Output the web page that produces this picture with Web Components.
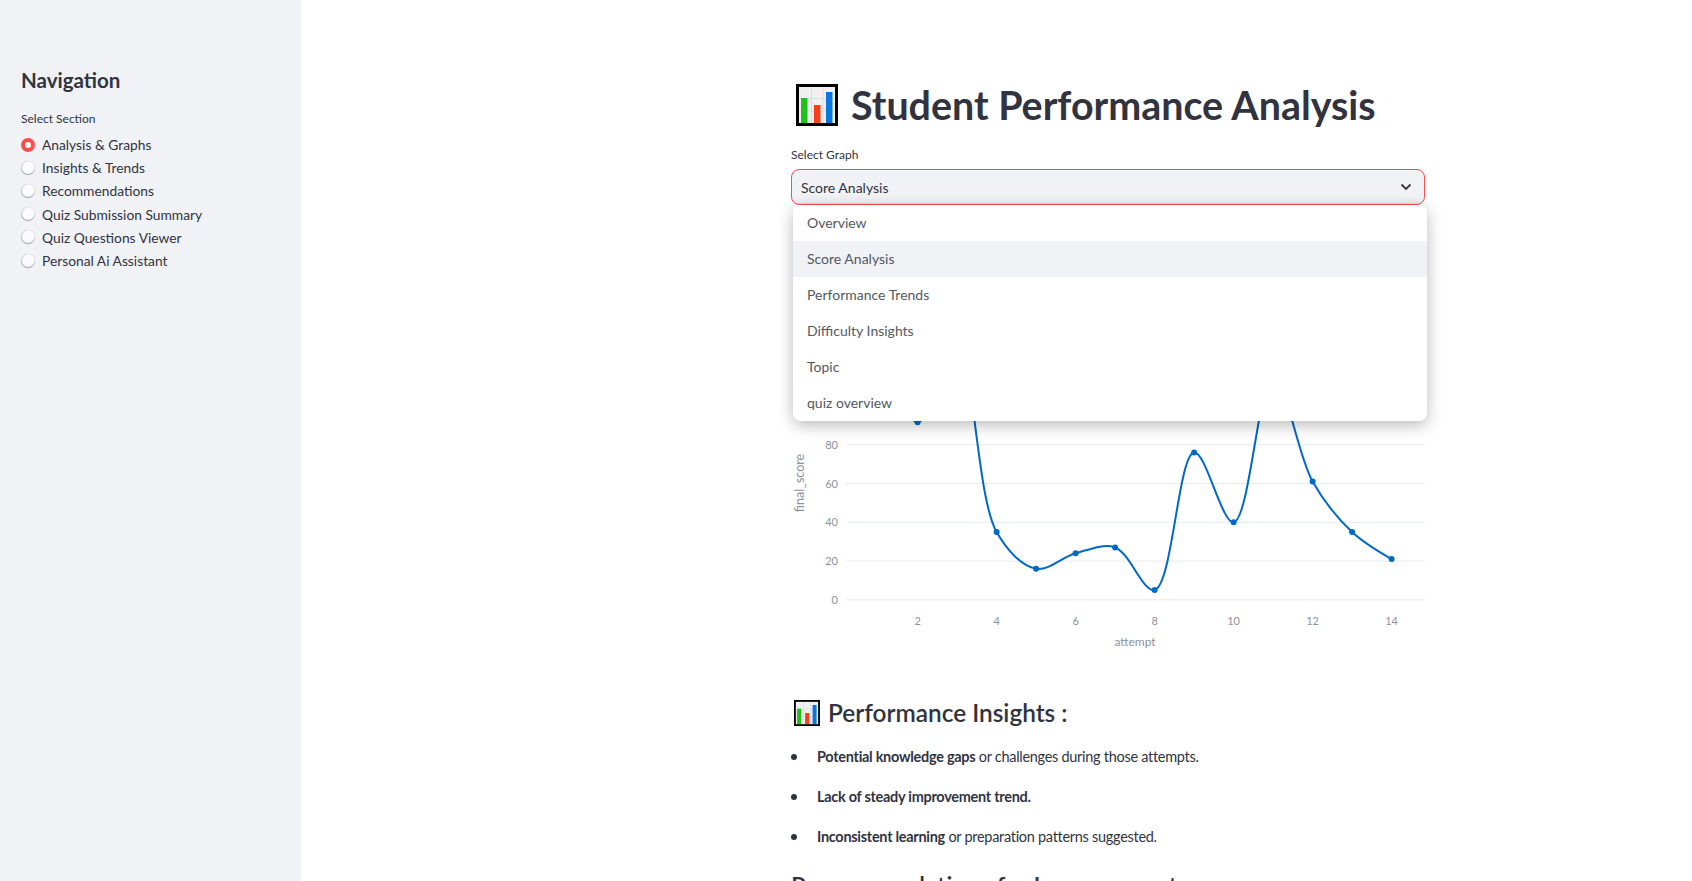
<!DOCTYPE html>
<html><head><meta charset="utf-8"><style>
html,body{margin:0;height:881px;overflow:hidden;background:#fff}
body{font-family:Lato,"Noto Sans",sans-serif;color:#31333f}
</style></head><body>
<app-shell>
  <side-nav slot="side" heading="Navigation" label="Select Section">
    <nav-radio checked>Analysis &amp; Graphs</nav-radio>
    <nav-radio>Insights &amp; Trends</nav-radio>
    <nav-radio>Recommendations</nav-radio>
    <nav-radio>Quiz Submission Summary</nav-radio>
    <nav-radio>Quiz Questions Viewer</nav-radio>
    <nav-radio>Personal Ai Assistant</nav-radio>
  </side-nav>
  <page-title>Student Performance Analysis</page-title>
  <select-box label="Select Graph" value="Score Analysis">
    <select-option>Overview</select-option>
    <select-option selected>Score Analysis</select-option>
    <select-option>Performance Trends</select-option>
    <select-option>Difficulty Insights</select-option>
    <select-option>Topic</select-option>
    <select-option>quiz overview</select-option>
  </select-box>
  <score-chart></score-chart>
  <section-heading>Performance Insights :</section-heading>
  <bullet-list>
    <bullet-item><b>Potential knowledge gaps</b> or challenges during those attempts.</bullet-item>
    <bullet-item><b>Lack of steady improvement trend.</b></bullet-item>
    <bullet-item><b>Inconsistent learning</b> or preparation patterns suggested.</bullet-item>
  </bullet-list>
  <next-heading>Recommendations for Improvement</next-heading>
</app-shell>
<script>
const def=(n,css,html,extra)=>{customElements.define(n,class extends HTMLElement{
  constructor(){super();const r=this.attachShadow({mode:'open'});r.innerHTML='<style>'+css+'</style>'+(typeof html==='function'?html(this):html);if(extra)extra(r,this);}
});};
const emoji=s=>`<svg width="${s}" height="${s}" viewBox="0 0 42 42" aria-hidden="true" style="display:block;flex:none"><rect width="42" height="42" fill="#000"/><rect x="3" y="3" width="36" height="36" fill="#f0f0f0"/><path d="M15.500 3V39M27 3V39M3 14.500H39M3 27H39" stroke="#dcdcdc" stroke-width="1"/><rect x="5" y="14" width="6.500" height="25" fill="#1fc11b"/><rect x="18" y="21" width="6.500" height="18" fill="#f4411c"/><rect x="30" y="8" width="6.500" height="31" fill="#0a78dc"/></svg>`;

def('app-shell',`:host{display:grid;grid-template-columns:301px 1fr;height:881px;overflow:hidden}
.side{background:#f0f2f6;min-height:881px}
.main{padding:84px 267px 0 490px;min-width:0;display:flow-root}`,
`<div class="side"><slot name="side"></slot></div><div class="main"><slot></slot></div>`);

def('side-nav',`:host{display:block;padding:64px 21px 0}
h2{margin:0;font:700 20.500px/32px Lato,sans-serif;color:#31333f}
.l{font-size:12px;line-height:20px;margin:13px 0 4px;color:#31333f}
.g{display:flex;flex-direction:column}`,
h=>`<h2>${h.getAttribute('heading')}</h2><div class="l">${h.getAttribute('label')}</div><div class="g"><slot></slot></div>`);

def('nav-radio',`:host{display:flex;align-items:center;gap:7px;height:23.200px;font-size:13.800px;color:#31333f}
.c{width:14px;height:14px;border-radius:50%;background:#fbfbfd;box-shadow:inset 0 -1px 1px #a5a7b0,inset 1px 0 1px #d0d2d8,0 0 0 .5px #dfe1e6;flex:none;display:flex;align-items:center;justify-content:center}
:host([checked]) .c{background:#ff4b4b;box-shadow:none}
:host([checked]) .c::after{content:"";width:6px;height:6px;border-radius:50%;background:#fff}`,
`<span class="c"></span><span><slot></slot></span>`);

def('page-title',`:host{display:flex;align-items:center;gap:13px;padding-left:5px;height:42px}
h1{margin:0;font:700 39.400px/42px Lato,sans-serif;color:#31333f;white-space:nowrap}`,
()=>emoji(42)+`<h1><slot></slot></h1>`);

def('select-box',`:host{display:block;position:relative;margin-top:19px}
.l{font-size:12px;line-height:20px;margin-bottom:4px}
.b{box-sizing:border-box;height:36px;border:1px solid #ff4b4b;border-radius:8px;background:#f0f2f6;display:flex;align-items:center;justify-content:space-between;padding:0 12px 0 9px;font-size:14px;box-shadow:inset 0 -3px 3px -3px #c8cad2}
.m{position:absolute;z-index:5;left:2px;top:60px;width:634px;background:#fff;border-radius:8px;box-shadow:0 4px 16px rgba(0,0,0,.28);overflow:hidden}`,
h=>`<div class="l">${h.getAttribute('label')}</div><div class="b"><span>${h.getAttribute('value')}</span><svg width="12" height="8" viewBox="0 0 12 8"><path d="M1.500 1.500L6 6L10.500 1.500" fill="none" stroke="#31333f" stroke-width="1.800"/></svg></div><div class="m"><slot></slot></div>`);

def('select-option',`:host{display:flex;align-items:center;box-sizing:border-box;height:36px;padding:0 0 2px 14px;font-size:14px;color:#55575f;background:#fff}
:host([selected]){background:#f0f2f6}`,`<slot></slot>`);

def('score-chart',`:host{display:block;margin-top:16px;height:450px}
svg{display:block}text{font-family:Lato,sans-serif}`,`<svg id="s" width="634" height="450" viewBox="0 0 634 450"></svg>`,r=>{
  const X=n=>47.600+39.500*n, Y=v=>378.800-1.9375*v;
  const data=[[1,135],[2,91.600],[3,128],[4,35],[5,16],[6,24],[7,27],[8,5],[9,76],[10,40],[11,115],[12,61],[13,35],[14,21]];
  const pts=data.map(d=>[X(d[0]),Y(d[1])]);
  const tan=(p,t,n)=>{const d1x=p[0]-t[0],d1y=p[1]-t[1],d2x=n[0]-t[0],d2y=n[1]-t[1];
    const a=Math.pow(d1x*d1x+d1y*d1y,.25),b=Math.pow(d2x*d2x+d2y*d2y,.25);
    const nx=b*b*d1x-a*a*d2x,ny=b*b*d1y-a*a*d2y,e1=3*b*(a+b),e2=3*a*(a+b);
    return [[t[0]+nx/e1,t[1]+ny/e1],[t[0]-nx/e2,t[1]-ny/e2]];};
  const T=[];for(let i=1;i<pts.length-1;i++)T.push(tan(pts[i-1],pts[i],pts[i+1]));
  let d='M'+pts[0]+'Q'+T[0][0]+' '+pts[1];
  for(let i=2;i<pts.length-1;i++)d+='C'+T[i-2][1]+' '+T[i-1][0]+' '+pts[i];
  d+='Q'+T[T.length-1][1]+' '+pts[pts.length-1];
  let o='';
  for(const v of [0,20,40,60,80]){o+=`<line x1="55" x2="634" y1="${Y(v)}" y2="${Y(v)}" stroke="#e7eaf3" stroke-width="1"/><text x="47" y="${Y(v)+4}" text-anchor="end" font-size="11" fill="#8e919c">${v}</text>`;}
  for(const n of [2,4,6,8,10,12,14])o+=`<text x="${X(n)}" y="403.500" text-anchor="middle" font-size="11" fill="#8e919c">${n}</text>`;
  o+=`<text x="344" y="424.500" text-anchor="middle" font-size="12" fill="#8e919c">attempt</text>`;
  o+=`<text transform="translate(12.500 262) rotate(-90)" text-anchor="middle" font-size="12.500" fill="#8e919c">final_score</text>`;
  o+=`<path d="${d}" fill="none" stroke="#0068c9" stroke-width="2"/>`;
  for(const p of pts)o+=`<circle cx="${p[0]}" cy="${p[1]}" r="3" fill="#0068c9"/>`;
  r.getElementById('s').innerHTML=o;
});

def('section-heading',`:host{display:flex;align-items:center;gap:8px;padding-left:3px;margin-top:29px;height:26px}
h3{margin:0;font:600 24.400px/26px Lato,sans-serif;color:#31333f;white-space:nowrap}`,
()=>emoji(26)+`<h3><slot></slot></h3>`);

def('bullet-list',`:host{display:block;margin-top:10.500px}`,`<slot></slot>`);
def('bullet-item',`:host{display:flex;height:40px;align-items:center;padding-left:26px;position:relative;font-size:14.500px;letter-spacing:-.29px;color:#31333f}
:host::before{content:"";position:absolute;left:0;top:17px;width:6px;height:6px;border-radius:50%;background:#31333f}`,`<span><slot></slot></span>`);
def('next-heading',`:host{display:block;margin-top:11px}
h2{margin:0;font:600 24.400px/36px Lato,sans-serif;white-space:nowrap;color:#31333f}`,`<h2><slot></slot></h2>`);
</script>
</body></html>
